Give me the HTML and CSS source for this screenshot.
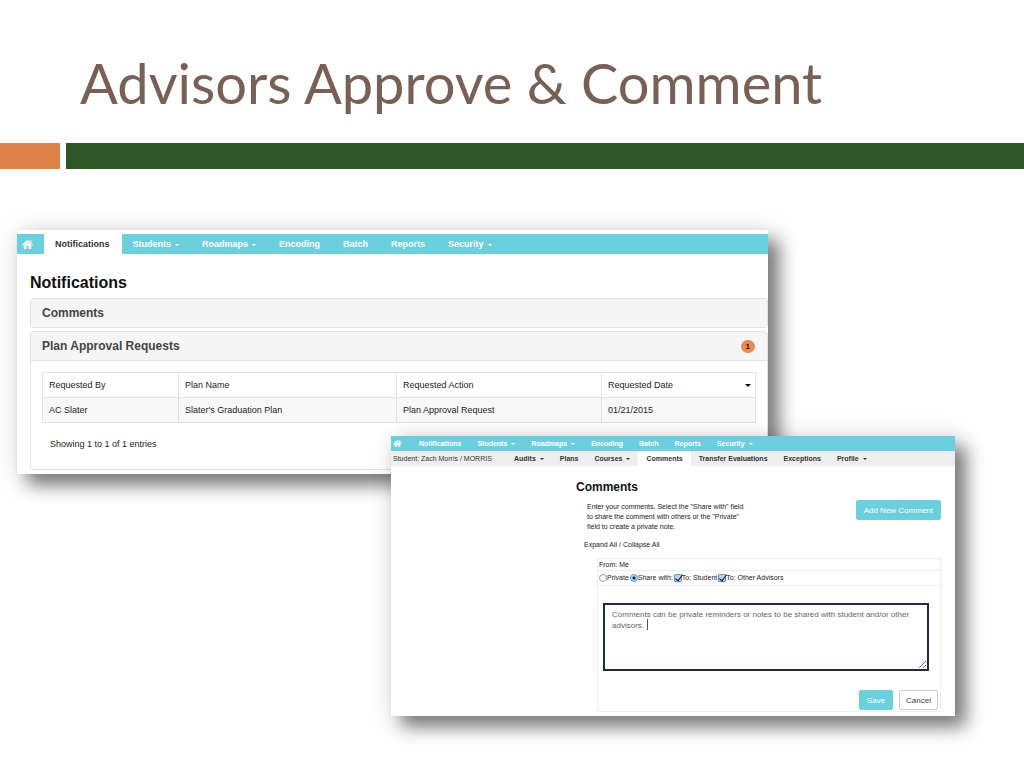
FILE: index.html
```html
<!DOCTYPE html>
<html lang="en">
<head>
    <meta charset="UTF-8">
    <title>Advisors Approve &amp; Comment</title>
    <link rel="stylesheet" href="styles.css">
</head>
<body>
    <svg class="sprite" aria-hidden="true">
        <symbol id="home" viewBox="0 0 22 18">
            <path d="M11 0 L0 9.2 L1.4 10.8 L11 2.8 L20.6 10.8 L22 9.2 L18.6 6.3 V1 H15.4 V3.7 Z"/>
            <path d="M11 4.2 L3.6 10.4 V18 H9 V12.4 H13 V18 H18.4 V10.4 Z"/>
        </symbol>
    </svg>

    <header class="slide-header">
        <h1>Advisors Approve &amp; Comment</h1>
    </header>
    <div class="rule">
        <div class="rule-accent"></div>
        <div class="rule-main"></div>
    </div>

    <main class="stage">
        <!-- Notifications window -->
        <section class="window notifications">
            <nav class="navbar">
                <a href="#" class="home" aria-label="Home"><svg><use href="#home"/></svg></a>
                <a href="#" class="active">Notifications</a>
                <a href="#" class="drop">Students</a>
                <a href="#" class="drop">Roadmaps</a>
                <a href="#">Encoding</a>
                <a href="#">Batch</a>
                <a href="#">Reports</a>
                <a href="#" class="drop">Security</a>
            </nav>
            <div class="content">
                <h2>Notifications</h2>
                <div class="panel">
                    <h3>Comments</h3>
                </div>
                <div class="panel">
                    <h3>Plan Approval Requests <span class="badge">1</span></h3>
                    <div class="panel-body">
                        <table>
                            <thead>
                                <tr>
                                    <th class="col-by">Requested By</th>
                                    <th class="col-plan">Plan Name</th>
                                    <th class="col-action">Requested Action</th>
                                    <th><span class="sort">Requested Date</span></th>
                                </tr>
                            </thead>
                            <tbody>
                                <tr>
                                    <td>AC Slater</td>
                                    <td>Slater's Graduation Plan</td>
                                    <td>Plan Approval Request</td>
                                    <td>01/21/2015</td>
                                </tr>
                            </tbody>
                        </table>
                        <p class="entries">Showing 1 to 1 of 1 entries</p>
                    </div>
                </div>
            </div>
        </section>

        <!-- Comments window -->
        <section class="window comments">
            <nav class="navbar small">
                <a href="#" class="home" aria-label="Home"><svg><use href="#home"/></svg></a>
                <a href="#">Notifications</a>
                <a href="#" class="drop">Students</a>
                <a href="#" class="drop">Roadmaps</a>
                <a href="#">Encoding</a>
                <a href="#">Batch</a>
                <a href="#">Reports</a>
                <a href="#" class="drop">Security</a>
            </nav>
            <nav class="navbar small sub">
                <span class="student">Student: Zach Morris / MORRIS</span>
                <a href="#" class="drop">Audits</a>
                <a href="#">Plans</a>
                <a href="#" class="drop">Courses</a>
                <a href="#" class="active">Comments</a>
                <a href="#">Transfer Evaluations</a>
                <a href="#">Exceptions</a>
                <a href="#" class="drop">Profile</a>
            </nav>
            <div class="comment-area">
                <h2>Comments</h2>
                <div class="intro">
                    <p>Enter your comments. Select the "Share with" field<br>to share the comment with others or the "Private"<br>field to create a private note.</p>
                    <button type="button" class="btn primary">Add New Comment</button>
                </div>
                <p class="expand"><a href="#">Expand All</a> / <a href="#">Collapse All</a></p>
                <form class="comment-form">
                    <div class="row from">From: Me</div>
                    <div class="row share">
                        <label><input type="radio" name="share">Private</label>
                        <label><input type="radio" name="share" checked>Share with:</label>
                        <label><input type="checkbox" checked>To: Student</label>
                        <label><input type="checkbox" checked>To: Other Advisors</label>
                    </div>
                    <div class="editor">
                        <textarea aria-label="Comment">Comments can be private reminders or notes to be shared with student and/or other advisors. </textarea>
                        <span class="cursor"></span>
                    </div>
                    <div class="actions">
                        <button type="button" class="btn primary">Save</button>
                        <button type="button" class="btn">Cancel</button>
                    </div>
                </form>
            </div>
        </section>
    </main>
</body>
</html>
```
FILE: styles.css
```css
:root {
    --teal: #6bcfde;
    --green: #2f5726;
    --orange: #dc8147;
    --line: #e2e2e2;
}

* {
    box-sizing: border-box;
}

body {
    margin: 0;
    background: #fefefe;
    font-family: "Liberation Sans", Arial, sans-serif;
    font-size: 9px;
    color: #333;
}

h1, h2, h3, p {
    margin: 0;
}

a {
    color: inherit;
    text-decoration: none;
}

.sprite {
    display: none;
}

/* slide title */
.slide-header {
    height: 143px;
    padding: 48px 80px 0;
}

h1 {
    font-family: Lato, sans-serif;
    font-size: 56px;
    line-height: 70px;
    font-weight: 400;
    color: #786056;
    white-space: nowrap;
}

.rule {
    display: flex;
    gap: 6px;
    height: 26px;
}

.rule-accent {
    width: 60px;
    background: var(--orange);
}

.rule-main {
    flex: 1;
    background: var(--green);
}

.stage {
    position: relative;
    min-height: 599px;
    padding: 61px 256px 0 17px;
}

.window {
    background: #fff;
    box-shadow: 11px 11px 16px rgba(0, 0, 0, 0.45), 4px 4px 24px rgba(0, 0, 0, 0.18);
}

.notifications {
    padding: 4px 0;
}

.comments {
    position: absolute;
    top: 267px;
    left: 391px;
    right: 69px;
    padding-bottom: 4px;
}

/* nav bars */
.navbar {
    display: flex;
    height: 20px;
    background: var(--teal);
    color: #fff;
    font-weight: bold;
    line-height: 20px;
    white-space: nowrap;
}

.navbar a {
    padding: 0 12px 0 11px;
}

.navbar .home {
    display: flex;
    align-items: center;
    width: 27px;
    padding: 0 5px;
}

.home svg {
    width: 11px;
    height: 9px;
    fill: #fff;
}

.navbar .active {
    background: #fff;
    color: #333;
}

.drop::after {
    content: "";
    display: inline-block;
    margin-left: 4px;
    vertical-align: 1px;
    border: 2px solid transparent;
    border-top-color: currentColor;
    border-bottom: 0;
}

.navbar.small {
    height: 15px;
    font-size: 7px;
    line-height: 15px;
}

.navbar.small a {
    padding: 0 8px;
}

.navbar.small .home {
    width: 20px;
    padding: 0 2px;
}

.small .home svg {
    width: 9px;
    height: 7px;
}

.navbar.sub {
    background: #eee;
    color: #333;
}

.student {
    width: 115px;
    padding-left: 2px;
    font-weight: normal;
}

/* notifications */
.content {
    padding: 19px 0 0 13px;
}

h2 {
    font-size: 16px;
    line-height: 20px;
    color: #111;
}

.panel {
    margin-top: 3px;
    border: 1px solid var(--line);
    border-radius: 3px;
}

h2 + .panel {
    margin-top: 5px;
}

.panel h3 {
    display: flex;
    justify-content: space-between;
    align-items: center;
    padding: 0 12px 0 11px;
    background: #f5f5f5;
    font-size: 12px;
    line-height: 28px;
    color: #444;
}

.badge {
    padding: 0 5px;
    border-radius: 7px;
    background: #e98a53;
    font-size: 8px;
    line-height: 13px;
    color: #222;
}

.panel-body {
    padding: 11px 11px 19px;
    border-top: 1px solid var(--line);
}

table {
    width: 100%;
    border-collapse: collapse;
    table-layout: fixed;
}

th, td {
    height: 25px;
    padding: 0 6px;
    border: 1px solid var(--line);
    text-align: left;
    font-weight: normal;
    color: #222;
}

td {
    background: #f8f8f8;
}

.col-by {
    width: 136px;
}

.col-plan {
    width: 218px;
}

.col-action {
    width: 205px;
}

.sort {
    display: flex;
    justify-content: space-between;
    align-items: center;
}

.sort::after {
    content: "";
    margin-right: -2px;
    border: 3px solid transparent;
    border-top-color: #111;
    border-bottom: 0;
}

.entries {
    padding: 15px 8px 0;
    line-height: 12px;
    color: #222;
}

/* comments */
.comment-area {
    padding: 13px 14px 0 185px;
    font-size: 7px;
    line-height: 10px;
    color: #222;
}

.comment-area h2 {
    font-size: 12px;
    line-height: 16px;
}

.intro {
    display: flex;
    justify-content: space-between;
    align-items: flex-start;
    padding: 5px 0 0 11px;
}

.intro p {
    padding-top: 2px;
}

.expand {
    padding: 8px 0 0 8px;
}

.btn {
    height: 20px;
    padding: 0 6px;
    border: 1px solid #ccc;
    border-radius: 2px;
    background: #fff;
    font-family: inherit;
    font-size: 8px;
    color: #444;
}

.btn.primary {
    padding: 0 7px;
    border-color: var(--teal);
    background: var(--teal);
    color: #fff;
}

.comment-form {
    margin: 8px 0 0 21px;
    border: 1px solid #eee;
}

.row {
    display: flex;
    align-items: center;
    height: 12px;
    padding-left: 1px;
    border-bottom: 1px solid #eee;
}

.share {
    gap: 1px;
    height: 15px;
}

.row label {
    display: flex;
    align-items: center;
}

.row input {
    appearance: none;
    width: 8px;
    height: 8px;
    margin: 0;
    border: 1px solid #999;
    background: #fff;
}

.row input[type="radio"] {
    border-radius: 50%;
}

.row input[type="radio"]:checked {
    border-color: #6a93c4;
    background: radial-gradient(circle, #123 1px, #b5d4f3 2px);
}

.row input[type="checkbox"] {
    position: relative;
    border-color: #6a93c4;
    border-radius: 1px;
    background: #b5d4f3;
}

.row input[type="checkbox"]::after {
    content: "";
    position: absolute;
    left: 2px;
    top: -2px;
    width: 3px;
    height: 7px;
    border: solid #112;
    border-width: 0 1px 1px 0;
    transform: rotate(38deg);
}

.editor {
    position: relative;
    padding: 17px 11px 0 5px;
}

textarea {
    display: block;
    width: 100%;
    height: 68px;
    padding: 4px 7px;
    border: 2px solid #1d2c40;
    background: #fff;
    font-family: inherit;
    font-size: 8px;
    line-height: 11px;
    color: #666;
    resize: vertical;
}

.cursor {
    position: absolute;
    left: 49px;
    top: 33px;
    width: 1px;
    height: 11px;
    background: #555;
}

.actions {
    display: flex;
    justify-content: flex-end;
    gap: 6px;
    padding: 19px 2px 1px;
}
```
